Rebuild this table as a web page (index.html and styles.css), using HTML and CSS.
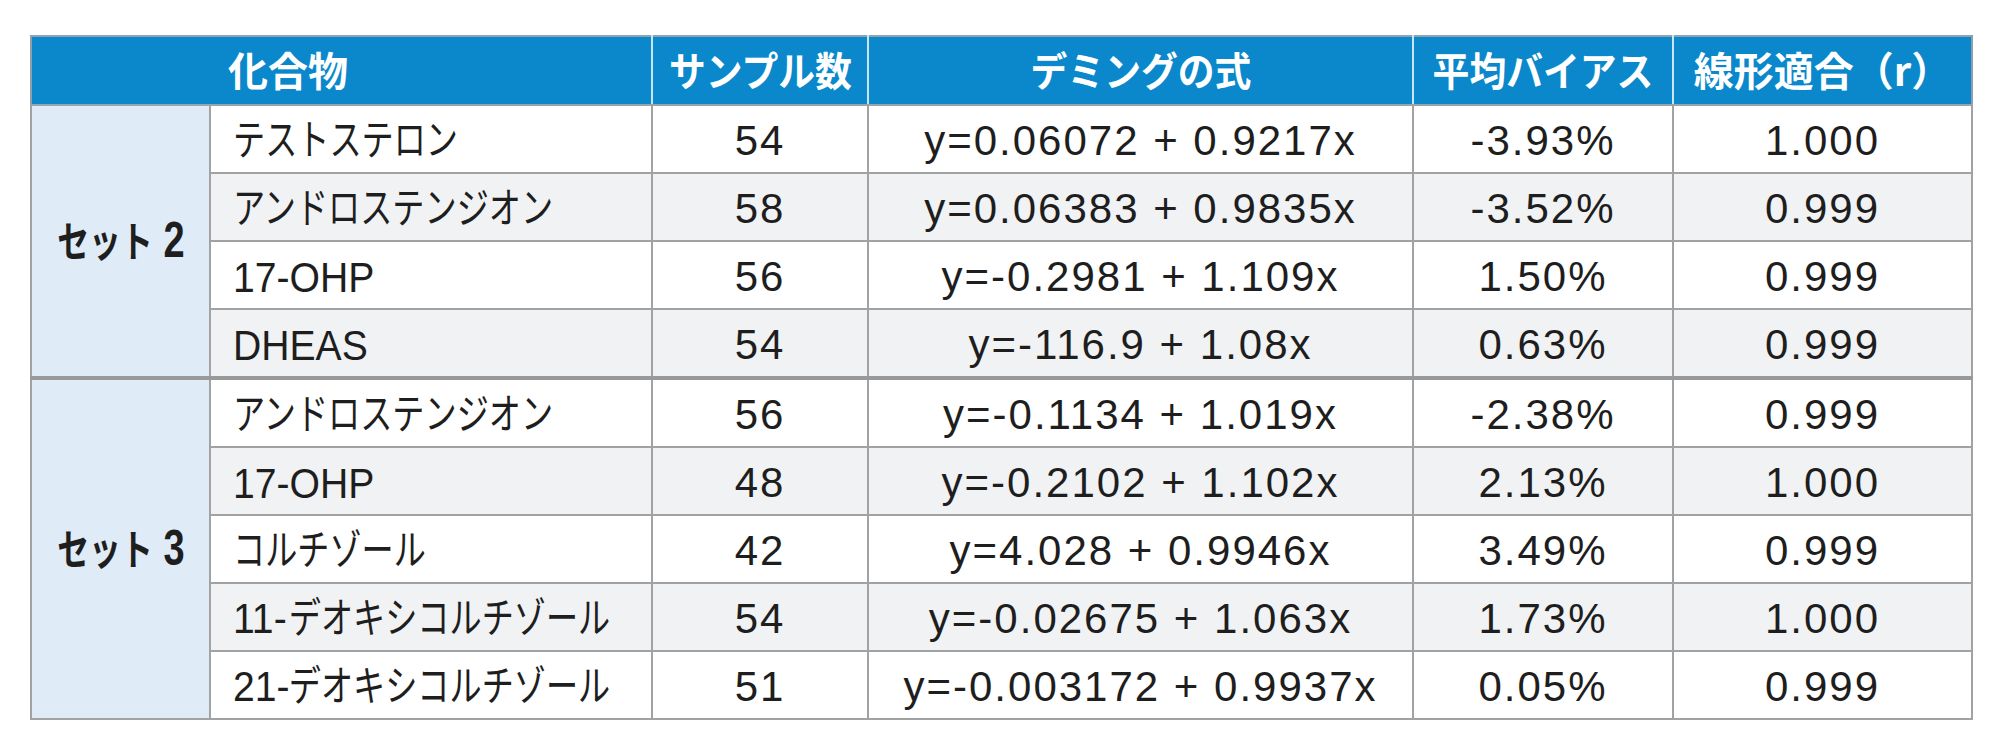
FILE: index.html
```html
<!DOCTYPE html>
<html lang="ja">
<head>
<meta charset="utf-8">
<link rel="stylesheet" href="styles.css">
</head>
<body>
<table class="data">
  <colgroup>
    <col class="c-set"><col class="c-name"><col class="c-n"><col class="c-eq"><col class="c-bias"><col class="c-r">
  </colgroup>
  <thead>
    <tr>
      <th colspan="2" class="h-compound"><span class="hj hk">化合物</span></th>
      <th><span class="hj">サンプル数</span></th>
      <th><span class="hj">デミングの式</span></th>
      <th><span class="hj">平均バイアス</span></th>
      <th><span class="hj hk">線形適合（r）</span></th>
    </tr>
  </thead>
  <tbody class="grp">
    <tr class="odd">
      <td rowspan="4" class="set"><span class="sj">セット<span class="sn"> 2</span></span></td>
      <td class="name"><span class="nj">テストステロン</span></td>
      <td>54</td><td>y=0.06072 + 0.9217x</td><td>-3.93%</td><td>1.000</td>
    </tr>
    <tr class="even">
      <td class="name"><span class="nj">アンドロステンジオン</span></td>
      <td>58</td><td>y=0.06383 + 0.9835x</td><td>-3.52%</td><td>0.999</td>
    </tr>
    <tr class="odd">
      <td class="name"><span class="nl">17-OHP</span></td>
      <td>56</td><td>y=-0.2981 + 1.109x</td><td>1.50%</td><td>0.999</td>
    </tr>
    <tr class="even">
      <td class="name"><span class="nl">DHEAS</span></td>
      <td>54</td><td>y=-116.9 + 1.08x</td><td>0.63%</td><td>0.999</td>
    </tr>
  </tbody>
  <tbody class="grp grp2">
    <tr class="odd">
      <td rowspan="5" class="set"><span class="sj">セット<span class="sn"> 3</span></span></td>
      <td class="name"><span class="nj">アンドロステンジオン</span></td>
      <td>56</td><td>y=-0.1134 + 1.019x</td><td>-2.38%</td><td>0.999</td>
    </tr>
    <tr class="even">
      <td class="name"><span class="nl">17-OHP</span></td>
      <td>48</td><td>y=-0.2102 + 1.102x</td><td>2.13%</td><td>1.000</td>
    </tr>
    <tr class="odd">
      <td class="name"><span class="nj">コルチゾール</span></td>
      <td>42</td><td>y=4.028 + 0.9946x</td><td>3.49%</td><td>0.999</td>
    </tr>
    <tr class="even">
      <td class="name"><span class="nj"><span class="pre"><span class="pre-in">11-</span></span>デオキシコルチゾール</span></td>
      <td>54</td><td>y=-0.02675 + 1.063x</td><td>1.73%</td><td>1.000</td>
    </tr>
    <tr class="odd">
      <td class="name"><span class="nj"><span class="pre"><span class="pre-in">21-</span></span>デオキシコルチゾール</span></td>
      <td>51</td><td>y=-0.003172 + 0.9937x</td><td>0.05%</td><td>0.999</td>
    </tr>
  </tbody>
</table>
</body>
</html>
```
FILE: styles.css
```css
html, body {
  margin: 0;
  background: #ffffff;
}
body {
  padding: 35px 0 0 30px;
}
.data {
  border-collapse: collapse;
  table-layout: fixed;
  width: 1941px;
  font-family: "Liberation Sans", "Noto Sans CJK JP", sans-serif;
  color: #1e1e1e;
}
.c-set { width: 179px; }
.c-name { width: 442px; }
.c-n { width: 216px; }
.c-eq { width: 545px; }
.c-bias { width: 260px; }
.c-r { width: 299px; }

.data th {
  background: #0a88cb;
  color: #ffffff;
  height: 67px;
  padding: 0;
  border: 2px solid #c9e6f2;
  border-top-color: #8fa3ae;
  border-bottom-color: #9aa5ab;
  text-align: center;
  vertical-align: middle;
  font-family: "Noto Sans CJK JP", sans-serif;
  font-weight: 700;
  font-size: 40px;
  white-space: nowrap;
}
.data th:first-child { border-left-color: #8f9ea8; }
.data th:last-child { border-right-color: #8f9ea8; }
.data th.h-compound {
  text-align: left;
  padding-left: 196px;
}
.hj {
  display: inline-block;
  transform: scaleX(0.92);
  line-height: 1;
  position: relative;
  top: -2px;
}
.hj.hk { transform: none; }

.data td {
  height: 63px;
  padding: 3px 0 0;
  border: 2px solid #a2a2a2;
  text-align: center;
  vertical-align: middle;
  font-size: 42px;
  letter-spacing: 2px;
  white-space: nowrap;
}
.data tr.odd td { background: #ffffff; }
.data tr.even td { background: #f1f2f4; }
.data td.set {
  background: #dfebf7 !important;
  padding-top: 0;
}
.data td.name {
  text-align: left;
  padding-left: 22px;
  letter-spacing: 0;
}
.nj {
  display: inline-block;
  font-family: "Noto Sans CJK JP", sans-serif;
  font-size: 42px;
  line-height: 1;
  transform: scaleX(0.765);
  transform-origin: left center;
}
.pre {
  display: inline-block;
  width: 73px;
  font-family: "Liberation Sans", sans-serif;
  font-size: 43px;
  vertical-align: baseline;
}
.pre-in {
  display: inline-block;
  transform: scaleX(1.19);
  transform-origin: left center;
}
.nl {
  display: inline-block;
  font-family: "Liberation Sans", sans-serif;
  font-size: 43px;
  line-height: 1;
  transform: scaleX(0.91);
  transform-origin: left center;
  position: relative;
  top: 1px;
}
.sj {
  display: inline-block;
  font-family: "Noto Sans CJK JP", sans-serif;
  font-weight: 700;
  font-size: 42px;
  letter-spacing: 0;
  line-height: 1;
  transform: scaleX(0.76);
}
.sn {
  font-family: "Liberation Sans", sans-serif;
  font-size: 50px;
}
.grp2 tr:first-child td {
  border-top: 4px solid #999999;
}
```
